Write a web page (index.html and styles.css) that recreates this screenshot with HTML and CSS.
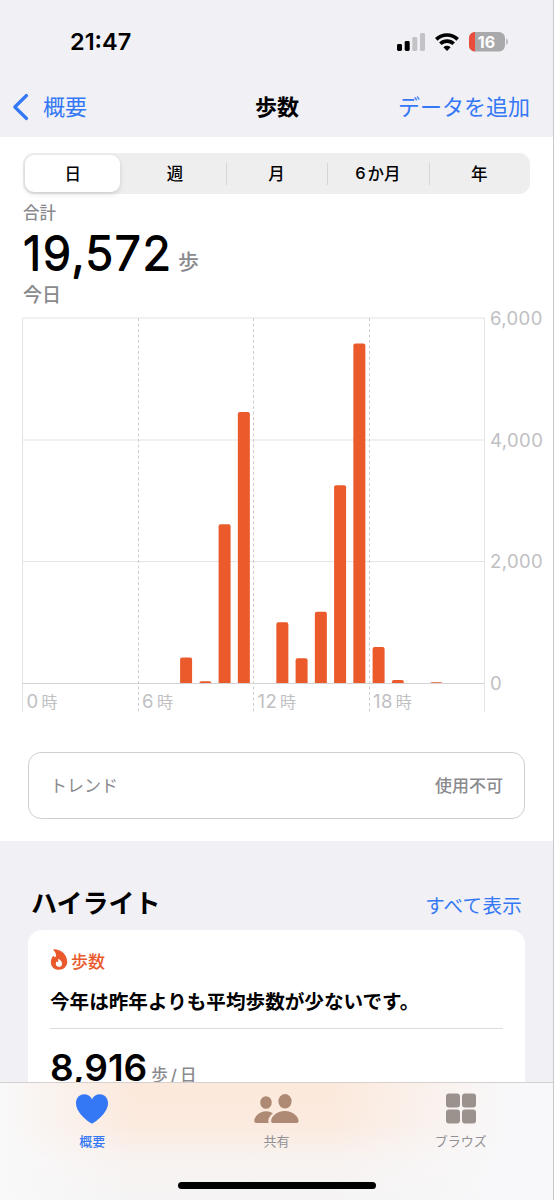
FILE: index.html
```
<!DOCTYPE html>
<html lang="ja">
<head>
  <meta charset="UTF-8">
  <meta name="viewport" content="width=device-width, initial-scale=1.0">
  <title>歩数</title>
  <link rel="stylesheet" href="styles.css">
</head>
<body>

<header class="header">
  <div class="status">
    <span class="clock">21:47</span>
    <svg class="status-icons" width="112" height="22" viewBox="0 0 112 22">
      <rect x="0" y="13" width="5" height="7" rx="1.4"/>
      <rect x="7.7" y="10" width="5" height="10" rx="1.4"/>
      <rect x="15.3" y="6" width="5" height="14" rx="1.4" fill="#c3c3c7"/>
      <rect x="23" y="2" width="5" height="18" rx="1.4" fill="#c3c3c7"/>
      <g fill="none" stroke="#000" stroke-width="3.7">
        <path d="M39.3 8.3a15.4 15.4 0 0 1 21.4 0"/>
        <path d="M43.4 12.8a9.4 9.4 0 0 1 13.200 0"/>
      </g>
      <path d="M46.400 16.300a5.200 5.200 0 0 1 7.200 0L50 20z"/>
      <rect x="72" y="1" width="36" height="19.500" rx="6" fill="#a9a9ac"/>
      <path d="M78 1a6 6 0 0 0-6 6v7.500a6 6 0 0 0 6 6z" fill="#eb4d3d"/>
      <path d="M109.300 7.600c2 .8 2 5.600 0 6.400z" fill="#a9a9ac"/>
      <text class="battery" x="89.500" y="16.500" text-anchor="middle">16</text>
    </svg>
  </div>
  <nav class="navbar">
    <a class="back">
      <svg width="17" height="28" viewBox="0 0 17 28"><path d="M14.500 2.500 2.800 14l11.700 11.500"/></svg>
      概要
    </a>
    <h1>歩数</h1>
    <a class="add">データを追加</a>
  </nav>
</header>

<section class="chart-section">
  <div class="segments">
    <span class="segment active">日</span>
    <span class="segment">週</span>
    <span class="segment line">月</span>
    <span class="segment line"><span class="six">6</span>か月</span>
    <span class="segment line">年</span>
  </div>

  <div class="summary">
    <p class="label">合計</p>
    <div class="total">
      <svg class="number" width="150" height="53" viewBox="0 0 150 53"><text x="0" y="42" textLength="148">19,572</text></svg>
      <span class="unit">歩</span>
    </div>
    <p class="today">今日</p>
  </div>

  <svg class="chart" width="553" height="400" viewBox="0 310 553 400">
    <g class="grid">
      <path d="M22.500 318h462M22.500 440h462M22.500 561.500h462"/>
      <path d="M22.500 318v394M484.500 318v394"/>
      <path class="dash" d="M138.500 318v394M253.500 318v394M369.500 318v394"/>
      <path class="base" d="M22.500 683.500h462"/>
    </g>
    <g class="bars" id="bars"></g>
    <g class="ticks">
      <text x="490" y="324.500">6,000</text>
      <text x="490" y="446.500">4,000</text>
      <text x="490" y="568">2,000</text>
      <text x="490" y="690">0</text>
      <text x="26.500" y="708">0<tspan dx="3">時</tspan></text>
      <text x="142" y="708">6<tspan dx="3">時</tspan></text>
      <text x="257.500" y="708">12<tspan dx="3">時</tspan></text>
      <text x="373" y="708">18<tspan dx="3">時</tspan></text>
    </g>
  </svg>

  <div class="trend">
    <span>トレンド</span>
    <b>使用不可</b>
  </div>
</section>

<section class="highlights">
  <div class="highlights-head">
    <h2>ハイライト</h2>
    <a>すべて表示</a>
  </div>
  <div class="card">
    <div class="card-title">
      <svg width="18" height="22" viewBox="0 0 18 22">
        <path fill="#e9592b" d="M3.600 1.300C3 .7 3.300.2 4.100.2 11 .2 17.200 5.500 17.200 12.800c0 4.700-3.500 8-8.200 8-4.700 0-8.100-3-8.100-7.600 0-2.400.8-4.300 2-5.900.3-.4.700-.4 1 0 .3.600.6.900 1 .9 1.700 0 1.600-3.900-1.300-6.900z"/>
        <path fill="#fff" d="M8.600 10c2.400 1.400 3.500 3 3.500 4.700 0 1.900-1.300 3.200-3.100 3.200-1.900 0-3.200-1.300-3.200-3.100 0-.9.300-1.600.8-2.200.2-.2.400-.2.500.1.200.4.400.5.600.4.600-.2.700-1.300.4-2.700-.1-.4.100-.6.500-.4z"/>
      </svg>
      歩数
    </div>
    <p class="card-text">今年は昨年よりも平均歩数が少ないです。</p>
    <p class="average"><span class="number">8,916</span><span class="unit">歩<i>/</i>日</span></p>
  </div>
</section>

<footer class="tabbar">
  <div class="tabs">
    <div class="tab active">
      <svg width="34" height="32" viewBox="0 0 34 32"><path d="M17 30.500C15.500 30.500 1 20.500 1 10.200 1 5 4.500 1.300 9 1.300c3.600 0 6.400 1.900 8 4.900 1.600-3 4.400-4.900 8-4.900 4.500 0 8 3.700 8 8.900 0 10.300-14.500 20.300-16 20.300z"/></svg>
      <span>概要</span>
    </div>
    <div class="tab share">
      <svg width="46" height="32" viewBox="0 0 46 32">
        <ellipse cx="13" cy="9.500" rx="5.800" ry="6.300"/>
        <path d="M16 30H3.500C2 30 1.300 29.300 1.300 28c0-4.400 5-9.800 11.700-9.800 2.700 0 5 .8 6.900 2.100-2.700 2.100-4.700 5.500-4.700 7.700 0 .8.300 1.500.8 2z"/>
        <ellipse cx="32" cy="8.300" rx="6.600" ry="7.200"/>
        <path d="M20.500 30c-1.600 0-2.400-.6-2.400-2 0-4.200 5.500-9.900 13.700-9.900S45.500 23.800 45.500 28c0 1.400-.8 2-2.400 2z"/>
      </svg>
      <span>共有</span>
    </div>
    <div class="tab browse">
      <svg width="32" height="32" viewBox="0 0 32 32">
        <rect x="1" y="0.500" width="14" height="14" rx="3"/>
        <rect x="17" y="0.500" width="14" height="14" rx="3"/>
        <rect x="1" y="16.500" width="14" height="14" rx="3"/>
        <rect x="17" y="16.500" width="14" height="14" rx="3"/>
      </svg>
      <span>ブラウズ</span>
    </div>
  </div>
  <div class="home"></div>
</footer>

<script>
  // 1時間ごとの歩数
  var steps = { 8: 420, 9: 30, 10: 2610, 11: 4455, 13: 1000, 14: 405, 15: 1170, 16: 3250, 17: 5580, 18: 590, 19: 50, 21: 12 };
  var html = '';

  for (var hour in steps) {
    var x = 22.5 + hour * 19.25 + 3.6;
    var h = steps[hour] * 365 / 6000;
    var r = Math.min(2, h);
    html += '<path d="M' + x + ' 683v' + (r - h) + 'q0 ' + -r + ' 2 ' + -r + 'h8q2 0 2 ' + r + 'V683z"/>';
  }
  document.getElementById('bars').innerHTML = html;
</script>

</body>
</html>
```
FILE: styles.css
```
* {
  box-sizing: border-box;
}
body {
  margin: 0;
  width: 554px;
  height: 1200px;
  overflow: hidden;
  display: flex;
  flex-direction: column;
  font-family: Inter, "Noto Sans CJK JP", sans-serif;
  color: #000;
  background-color: #f0f0f5;
  border-right: 1px solid #c8c8cc;
}
h1, h2, p {
  margin: 0;
}
.header {
  height: 137px;
  flex: none;
}
.status {
  display: flex;
  justify-content: space-between;
  align-items: center;
  height: 77px;
  padding: 6px 44px 0 70px;
}
.clock {
  font-size: 23.5px;
  font-weight: 600;
  line-height: 28px;
}
.status-icons {
  display: block;
}
.battery {
  font-size: 16px;
  font-weight: 700;
  fill: #fff;
}
.navbar {
  display: grid;
  grid-template-columns: minmax(0, 1fr) 44px minmax(0, 1fr);
  align-items: center;
  height: 60px;
  padding: 0 23px 0 12px;
  line-height: 32px;
  font-size: 22px;
}
.navbar h1 {
  margin-left: 6px;
  margin-right: -6px;
  font-size: 22px;
  font-weight: 700;
}
.back {
  display: flex;
  align-items: center;
  gap: 14px;
  color: #3478f6;
}
.back svg {
  fill: none;
  stroke: #3478f6;
  stroke-width: 3.2;
  stroke-linecap: round;
  stroke-linejoin: round;
}
.add {
  color: #3478f6;
  text-align: right;
  white-space: nowrap;
}
.chart-section {
  height: 704px;
  flex: none;
  padding-top: 16px;
  background-color: #fff;
}
.segments {
  display: grid;
  grid-template-columns: repeat(5, 1fr);
  height: 41px;
  margin: 0 23px;
  padding: 2px 0;
  border-radius: 11px;
  background-color: #eeeeef;
}
.segment {
  display: flex;
  align-items: center;
  justify-content: center;
  padding-bottom: 2px;
  font-size: 16.5px;
  font-weight: 500;
}
.six {
  margin-right: 2px;
}
.segment.active {
  margin: 0 4px 0 2px;
  border-radius: 9px;
  background-color: #fff;
  box-shadow: 0 2px 5px rgba(0, 0, 0, 0.14);
}
.segment.line {
  background: linear-gradient(#d6d6d9, #d6d6d9) left center / 1px 22px no-repeat;
}
.summary {
  height: 116px;
  padding-left: 23px;
  color: #8a8a8e;
}
.label {
  height: 34px;
  padding-top: 7px;
  font-size: 16.5px;
  font-weight: 500;
  line-height: 24px;
}
.total {
  display: flex;
  align-items: flex-end;
  gap: 5px;
  height: 55px;
}
.total .number {
  font-size: 46.5px;
  font-weight: 300;
  stroke: #000;
  stroke-width: 1.8px;
  stroke-linejoin: round;
  fill: #000;
  overflow: visible;
  align-self: flex-start;
}
.total .unit {
  font-size: 21px;
  font-weight: 500;
  line-height: 30px;
  padding-bottom: 6px;
}
.today {
  font-size: 19px;
  font-weight: 500;
  line-height: 26px;
}
.chart {
  display: block;
  overflow: visible;
}
.grid {
  fill: none;
  stroke: #e3e3e6;
  stroke-width: 1;
}
.grid .dash {
  stroke: #cfcfd2;
  stroke-dasharray: 3 2.5;
}
.grid .base {
  stroke: #d4d4d7;
}
.bars {
  fill: #ea5a2a;
}
.ticks {
  font-size: 18.5px;
  letter-spacing: 0.4px;
  fill: #c0c0c3;
}
.ticks tspan {
  font-size: 16px;
}
.trend {
  display: flex;
  justify-content: space-between;
  align-items: center;
  height: 67px;
  margin: 42px 28px 0;
  padding: 0 21px 2px;
  border: 1.5px solid #cfcfd3;
  border-radius: 13px;
  font-size: 17px;
  color: #8a8a8e;
}
.trend b {
  font-weight: 500;
}
.highlights {
  height: 241px;
  flex: none;
  overflow: hidden;
  padding: 0 28px;
}
.highlights-head {
  display: flex;
  justify-content: space-between;
  align-items: baseline;
  height: 89px;
  padding: 43px 3px 0 3px;
}
.highlights h2 {
  font-size: 26px;
  line-height: 40px;
  font-weight: 700;
}
.highlights-head a {
  font-size: 19.5px;
  letter-spacing: 0.3px;
  color: #3478f6;
}
.card {
  height: 200px;
  padding: 16px 22px 0;
  border-radius: 14px;
  background-color: #fff;
}
.card-title {
  display: flex;
  align-items: center;
  gap: 3px;
  height: 28px;
  font-size: 17px;
  font-weight: 500;
  color: #e9592b;
}
.card-text {
  height: 55px;
  padding-top: 13px;
  border-bottom: 1px solid #dcdcde;
  font-size: 19.6px;
  font-weight: 700;
  line-height: 30px;
  white-space: nowrap;
}
.average {
  display: flex;
  align-items: baseline;
  gap: 4px;
  padding-top: 18px;
  line-height: 42px;
}
.average .number {
  font-size: 37px;
  font-weight: 600;
}
.average .unit {
  font-size: 16.5px;
  font-weight: 500;
  color: #8a8a8e;
}
.average i {
  margin: 0 3px;
  font-style: normal;
}
.tabbar {
  height: 118px;
  flex: none;
  border-top: 1px solid #d5d0cf;
  background:
    linear-gradient(90deg, #f9f9fa 0, rgba(249, 249, 250, 0) 24%, rgba(249, 249, 250, 0) 60%, #f8f8fa 92%),
    linear-gradient(#fce9dc 0, #fbeade 35%, #f8f2f0 65%, #f5f4f4 100%);
}
.tabs {
  display: grid;
  grid-template-columns: repeat(3, 1fr);
  height: 96px;
  padding-top: 10px;
}
.tab {
  display: flex;
  flex-direction: column;
  align-items: center;
  font-size: 13px;
  font-weight: 400;
  line-height: 20px;
  color: #929195;
}
.tab span {
  margin-top: 6px;
}
.tab.active {
  color: #3478f6;
  fill: #3478f6;
  font-weight: 500;
}
.share {
  fill: #ae8974;
}
.browse {
  fill: #9b928e;
}
.home {
  width: 198px;
  height: 7px;
  margin: 3px auto 0;
  border-radius: 4px;
  background-color: #000;
}
```
